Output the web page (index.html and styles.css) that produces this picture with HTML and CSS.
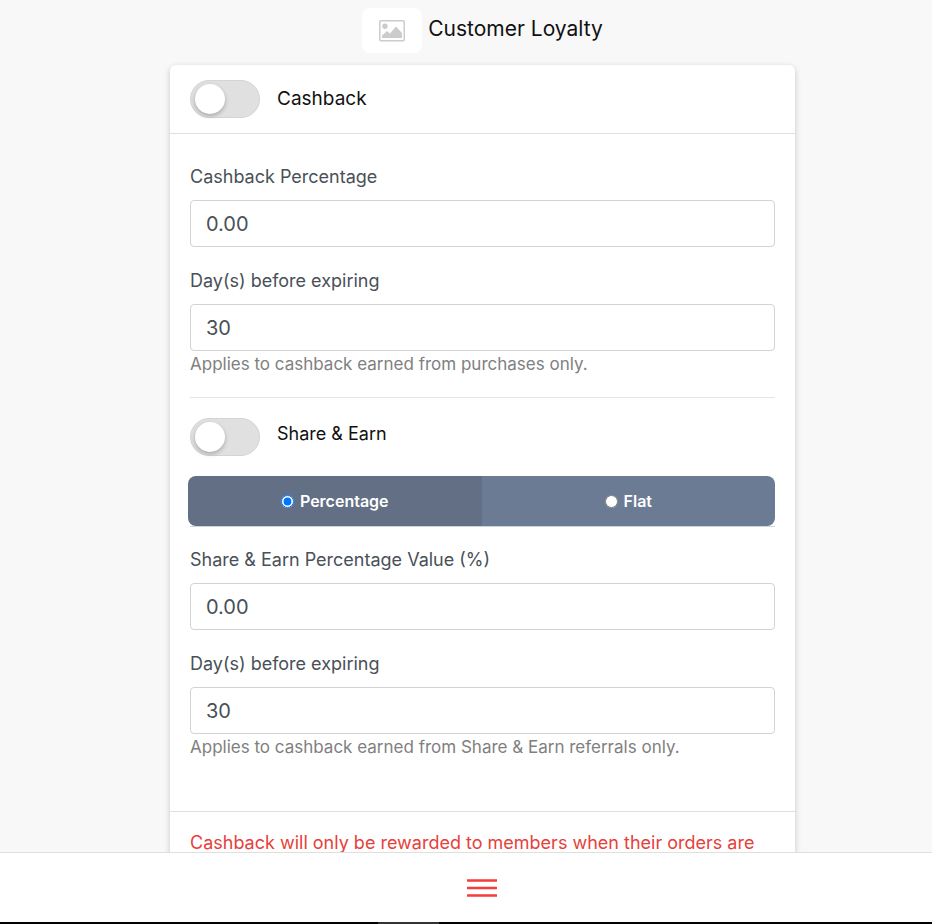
FILE: index.html
```html
<!DOCTYPE html>
<html lang="en">
<head>
    <meta charset="UTF-8">
    <meta name="viewport" content="width=device-width, initial-scale=1.0">
    <title>Customer Loyalty</title>
    <link rel="stylesheet" href="styles.css">
</head>
<body>

    <main class="page">
        <header class="page-header">
            <div class="logo">
                <svg width="26" height="22" viewBox="0 0 26 22" role="img" aria-label="Logo">
                    <rect x="0.75" y="0.75" width="24.5" height="20" rx="1.2" fill="none" stroke="#ccc" stroke-width="1.5"/>
                    <circle cx="6" cy="6.2" r="2.7" fill="#ccc"/>
                    <path d="M3 18v-2.500l5-4.500 3 2.500 6-7 6 6.500v5z" fill="#ccc"/>
                </svg>
            </div>
            <h1>Customer Loyalty</h1>
        </header>

        <form class="card">
            <div class="card-header">
                <input class="switch" type="checkbox" id="cashback">
                <label class="card-title" for="cashback">Cashback</label>
            </div>

            <div class="card-body">
                <div class="form-group">
                    <label for="cashback-percentage">Cashback Percentage</label>
                    <input class="form-control" type="text" inputmode="decimal" id="cashback-percentage" value="0.00">
                </div>

                <div class="form-group">
                    <label for="cashback-days">Day(s) before expiring</label>
                    <input class="form-control" type="text" inputmode="numeric" id="cashback-days" value="30">
                    <small class="help">Applies to cashback earned from purchases only.</small>
                </div>

                <hr>

                <!-- Share & Earn -->
                <div class="switch-row">
                    <input class="switch" type="checkbox" id="share-earn">
                    <label for="share-earn">Share &amp; Earn</label>
                </div>

                <div class="type-row">
                    <div class="btn-group">
                        <label class="btn active"><input type="radio" name="type" checked>Percentage</label>
                        <label class="btn"><input type="radio" name="type">Flat</label>
                    </div>
                </div>

                <div class="form-group">
                    <label for="share-percentage">Share &amp; Earn Percentage Value (%)</label>
                    <input class="form-control" type="text" inputmode="decimal" id="share-percentage" value="0.00">
                </div>

                <div class="form-group">
                    <label for="share-days">Day(s) before expiring</label>
                    <input class="form-control" type="text" inputmode="numeric" id="share-days" value="30">
                    <small class="help">Applies to cashback earned from Share &amp; Earn referrals only.</small>
                </div>
            </div>

            <div class="card-footer">Cashback will only be rewarded to members when their orders are</div>
        </form>
    </main>

    <nav class="bottom-nav">
        <button class="menu-btn" type="button" aria-label="Menu">
            <svg width="30" height="18" viewBox="0 0 30 18">
                <path d="M0 1.500h30M0 9h30M0 16.500h30" stroke="#f83c3c" stroke-width="2.500"/>
            </svg>
        </button>
    </nav>
    <div class="bottom-edge"><span></span></div>

</body>
</html>
```

FILE: styles.css
```css
* {
    box-sizing: border-box;
}

body {
    margin: 0;
    height: 100vh;
    display: flex;
    flex-direction: column;
    overflow: hidden;
    background-color: #f8f8f8;
    color: #495057;
    font-family: Inter, "Liberation Sans", sans-serif;
    font-size: 18px;
    font-weight: 400;
    line-height: 28px;
}

.page {
    flex: 1;
    min-height: 0;
    overflow: hidden;
    padding: 8px 0 0 33px;
}

.page-header {
    display: flex;
    justify-content: center;
    gap: 6px;
    margin-bottom: 12px;
}

.logo {
    display: flex;
    align-items: center;
    justify-content: center;
    width: 60px;
    height: 45px;
    background-color: #fff;
    border-radius: 8px;
}

h1 {
    margin: 0;
    padding-top: 7px;
    color: #111;
    font-size: 21px;
    font-weight: 400;
}

/* Card */
.card {
    max-width: 625px;
    margin: 0 auto;
    background-color: #fff;
    border-radius: 6px;
    box-shadow: 0 2px 6px rgba(0, 0, 0, 0.2);
}

.card-header {
    display: flex;
    align-items: center;
    gap: 17px;
    padding: 15px 20px;
    border-bottom: 1px solid #dfdfdf;
}

.card-title {
    color: #111;
    font-size: 19px;
}

.card-body {
    padding: 29px 20px 51px;
}

.card-footer {
    padding: 17px 20px;
    border-top: 1px solid #dfdfdf;
    color: #e8403a;
}

/* Form fields */
.form-group + .form-group {
    margin-top: 20px;
}

.form-group label {
    display: block;
    margin-bottom: 9px;
}

.form-control {
    display: block;
    width: 100%;
    height: 47px;
    padding: 0 15px;
    border: 1px solid #ced4da;
    border-radius: 4px;
    background-color: #fff;
    color: #495057;
    font-family: inherit;
    font-size: 20px;
    font-weight: 400;
}

.help {
    display: block;
    color: #808080;
    font-size: 17px;
    line-height: 26px;
}

hr {
    margin: 20px 0;
    border: 0;
    border-top: 1px solid #e5e5e5;
}

/* Toggle switch */
.switch {
    appearance: none;
    flex: none;
    width: 70px;
    height: 38px;
    margin: 0;
    padding: 3px 4px;
    border: 1px solid #d4d4d4;
    border-radius: 19px;
    background-color: #e0e0e0;
    cursor: pointer;
}

.switch::before {
    content: "";
    display: block;
    width: 30px;
    height: 30px;
    border-radius: 50%;
    background-color: #fff;
    box-shadow: 0 2px 4px rgba(0, 0, 0, 0.25);
}

.switch:checked {
    background-color: #f83c3c;
}

.switch:checked::before {
    margin-left: 30px;
}

.switch-row {
    display: flex;
    gap: 17px;
    margin-bottom: 20px;
    color: #111;
    line-height: 32px;
}

/* Percentage / Flat */
.type-row {
    margin-bottom: 19px;
    border-bottom: 1px solid #ced4da;
}

.btn-group {
    display: flex;
    margin-left: -2px;
    border-radius: 8px;
    overflow: hidden;
}

.btn {
    flex: 1;
    display: flex;
    align-items: center;
    justify-content: center;
    gap: 6px;
    height: 50px;
    background-color: #6c7b94;
    color: #fff;
    font-size: 16px;
    font-weight: 600;
    cursor: pointer;
}

.btn.active {
    background-color: #626f84;
}

.btn input {
    margin: 0;
}

/* Bottom bar */
.bottom-nav {
    display: flex;
    align-items: center;
    justify-content: center;
    height: 70px;
    padding-left: 32px;
    border-top: 1px solid #dfdfdf;
    background-color: #fff;
}

.menu-btn {
    display: flex;
    padding: 0;
    border: 0;
    background: none;
    cursor: pointer;
}

.bottom-edge {
    height: 2px;
    padding-left: 378px;
    background-color: #000;
}

.bottom-edge span {
    display: block;
    width: 61px;
    height: 2px;
    background-color: #333;
}
```
